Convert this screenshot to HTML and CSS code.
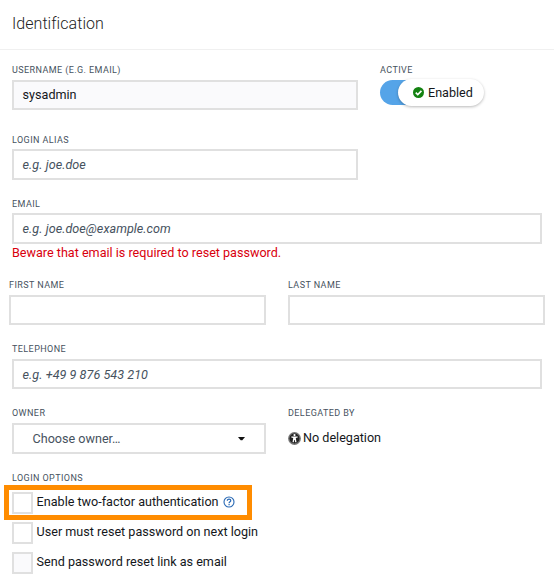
FILE: index.html
```html
<!DOCTYPE html>
<html lang="en">
<head>
<meta charset="utf-8">
<title>Identification</title>
<link rel="stylesheet" href="styles.css">
</head>
<body>
<header class="header"><h1 class="title">Identification</h1></header>
<form class="form">
  <div class="row row-user">
    <div class="field"><label class="label">Username (e.g. email)</label><div class="input filled">sysadmin</div></div>
    <div class="field">
      <span class="label">Active</span>
      <div class="switch">
        <div class="knob">
          <svg class="check" viewBox="0 0 12 12"><circle cx="6" cy="6" r="6" fill="#138211"/><path d="M3 6.1 5.2 8.3 9.2 4.3" fill="none" stroke="#fff" stroke-width="1.8"/></svg>
          <span class="enabled">Enabled</span>
        </div>
      </div>
    </div>
  </div>
  <div class="row row-alias"><div class="field"><label class="label">Login alias</label><div class="input tall hint">e.g. joe.doe</div></div></div>
  <div class="row row-email"><div class="field"><label class="label">Email</label><div class="input tall hint">e.g. joe.doe@example.com</div><p class="warning">Beware that email is required to reset password.</p></div></div>
  <div class="row row-names">
    <div class="field"><label class="label">First name</label><div class="input"></div></div>
    <div class="field"><label class="label">Last name</label><div class="input"></div></div>
  </div>
  <div class="row row-phone"><div class="field"><label class="label">Telephone</label><div class="input hint phone">e.g. +49 9 876 543 210</div></div></div>
  <div class="row row-owner">
    <div class="field"><label class="label">Owner</label><div class="input tall select"><span class="choice">Choose owner…</span><svg class="caret" viewBox="0 0 7 4"><path d="M0 0h7L4.3 3.3H2.7z" fill="#111"/></svg></div></div>
    <div class="field"><span class="label">Delegated by</span>
      <div class="delegation">
        <svg class="person" viewBox="0 0 13 13"><circle cx="6.5" cy="6.5" r="6.4" fill="#777"/><circle cx="6.5" cy="6.5" r="5" fill="#222"/><circle cx="6.5" cy="3.1" r="1.1" fill="#fff"/><path d="M3.3 4.5h6.4v1L7.8 6l.7 4.2H7.2L6.8 8h-.6l-.4 2.2H4.5L5.2 6l-1.9-.5z" fill="#fff"/></svg>
        <span class="deleg-text">No delegation</span>
      </div>
    </div>
  </div>
  <div class="options">
    <span class="label">Login options</span>
    <div class="option highlight"><span class="box"></span><span class="opt-text">Enable two-factor authentication</span>
      <svg class="help" viewBox="0 0 12 12"><circle cx="6" cy="6" r="5" fill="#fff" stroke="#2868b4" stroke-width="1.1"/><path d="M4.3 4.8C4.3 2.6 7.8 2.7 7.8 4.7 7.8 5.9 6.1 5.8 6.1 7.2M6.1 8v1.2" fill="none" stroke="#2868b4" stroke-width="1.2"/></svg>
    </div>
    <div class="option"><span class="box"></span><span class="opt-text">User must reset password on next login</span></div>
    <div class="option"><span class="box shaded"></span><span class="opt-text">Send password reset link as email</span></div>
  </div>
</form>
</body>
</html>
```
FILE: styles.css
```css
*, *::before, *::after { box-sizing: border-box; }
body { margin: 0; background: #fff; color: #14171b; font: 12.6px/18px Roboto, sans-serif; white-space: nowrap; overflow: hidden; }
.header { height: 50px; padding: 12px 12px 0; border-bottom: 1px solid #f0f0f0; }
.title { margin: 0; font-size: 16px; line-height: 23px; font-weight: 300; letter-spacing: .05px; color: #222; }
.form { padding-top: 13px; }
.row { display: grid; padding: 0 12px; }
.row-user { height: 69px; grid-template-columns: 346px 110px; column-gap: 22px; }
.row-alias { height: 64px; grid-template-columns: 346px; }
.row-alias .label { padding-top: 1px; }
.row-email { height: 82px; }
.row-email .label { padding-top: 1px; }
.row-names { height: 64px; padding: 0 9px; grid-template-columns: 257px 257px; column-gap: 22px; }
.row-phone { height: 64px; }
.row-owner { height: 65px; grid-template-columns: 254px 254px; column-gap: 22px; }
.label { display: block; height: 14px; margin-bottom: 3px; font-size: 9px; line-height: 14px; letter-spacing: .42px; text-transform: uppercase; color: #46525e; }
.input { height: 30px; border: 2px solid #e0e0e0; padding: 0 9px 0 8.6px; line-height: 26px; background: #fff; }
.tall { height: 31px; line-height: 27px; }
.filled { background: #fafafc; }
.hint { font-style: italic; color: #46525e; letter-spacing: .04px; }
.phone { line-height: 27px; }
.warning { margin: 0; color: #d9000d; line-height: 18px; }
.switch { width: 105px; height: 25px; margin-top: 1px; border-radius: 13px; background: linear-gradient(90deg, #55a4e8 0 40px, transparent 40px); }
.knob { display: flex; align-items: center; width: 86px; height: 27px; margin-left: 18px; padding-left: 15px; position: relative; top: -1px; border-radius: 14px; background: #fff; box-shadow: 0 1px 3px rgba(0,0,0,.28); }
.check { width: 11px; height: 11px; margin-right: 4px; }
.select { display: flex; align-items: center; justify-content: space-between; padding: 0 19px 0 18.5px; color: #46525e; }
.caret { width: 7px; height: 4px; }
.delegation { display: flex; align-items: center; height: 30px; }
.person { width: 13px; height: 13px; margin: 1px 2px 0 0; }
.options { padding: 0 12px; }
.option { display: flex; height: 22px; margin-bottom: 8px; }
.options .label { margin-bottom: 7px; }
.box { width: 21px; height: 22px; border: 2px solid #e0e0e0; background: #fff; }
.shaded { background: #fafafc; }
.opt-text { margin-left: 3.6px; line-height: 19px; }
.help { width: 12px; height: 12px; margin: 4px 0 0 4px; }
.highlight { position: relative; }
.highlight::after { content: ""; position: absolute; left: -8px; top: -7px; width: 248px; height: 35px; border: 5px solid #ff8c00; }
```
